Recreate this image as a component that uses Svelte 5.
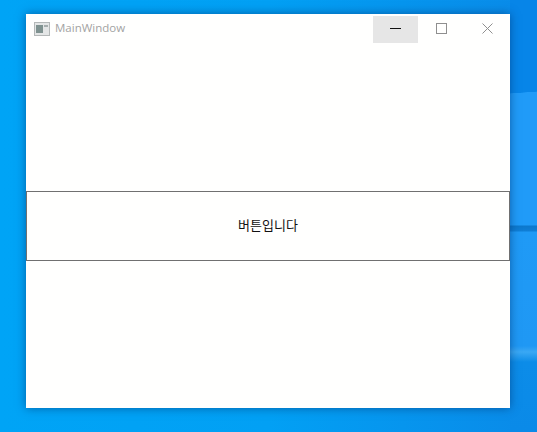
<script>
  let title = 'MainWindow';
  let label = '버튼입니다';
</script>

<div class="desktop">
  <div class="wall"></div>
  <div class="window">
    <div class="titlebar">
      <svg class="appicon" width="16" height="14" viewBox="0 0 16 14">
        <rect x="0.5" y="0.5" width="15" height="13" fill="#e4e6e6" stroke="#b4b8b8" />
        <rect x="2" y="3" width="7" height="8" fill="#7f9290" />
        <rect x="10" y="3" width="4" height="2" fill="#a6aeae" />
      </svg>
      <span class="title">{title}</span>
      <div class="controls">
        <div class="ctl min">
          <svg width="11" height="11" viewBox="0 0 11 11"><path d="M0 5.5H11" stroke="#111" fill="none" /></svg>
        </div>
        <div class="ctl">
          <svg width="11" height="11" viewBox="0 0 11 11"><rect x="0.5" y="0.5" width="10" height="10" stroke="#8f8f8f" fill="none" /></svg>
        </div>
        <div class="ctl">
          <svg width="11" height="11" viewBox="0 0 11 11"><path d="M0.5 0.5L10.5 10.5M10.5 0.5L0.5 10.5" stroke="#8f8f8f" fill="none" /></svg>
        </div>
      </div>
    </div>
    <div class="content">
      <button>{label}</button>
    </div>
  </div>
</div>

<style>
  :global(body) {
    margin: 0;
    overflow: hidden;
  }

  .desktop {
    position: relative;
    width: 537px;
    height: 432px;
    box-sizing: border-box;
    padding: 14px 27px 24px 26px;
    background: linear-gradient(90deg, #00a4f6 0%, #02a0f4 50%, #0a8ae8 100%);
    overflow: hidden;
  }

  /* wallpaper streaks right of the window */
  .wall {
    position: absolute;
    top: 0;
    right: 0;
    bottom: 0;
    width: 27px;
    background:
      linear-gradient(176deg, #0785e8 0, #0785e8 93px, transparent 93.5px),
      linear-gradient(
        180deg,
        #209bf8 0,
        #209bf8 225px,
        #0c78cc 226px,
        #0f7ed6 231px,
        #1f9af6 232px,
        #1f98f4 346px,
        #3aa8f4 352px,
        #0c8ce8 362px,
        #0a8ae8 432px
      );
  }

  .window {
    position: relative;
    display: flex;
    flex-direction: column;
    height: 100%;
    background: #fffffe;
    box-shadow: 0 0 9px rgba(0, 50, 110, 0.6);
  }

  .titlebar {
    display: flex;
    align-items: flex-start;
    height: 30px;
    padding: 0 0 0 8px;
  }

  .appicon {
    flex: none;
    margin-top: 8px;
  }

  .title {
    margin-left: 5px;
    margin-top: 5px;
    font: 11.5px/18px "Open Sans", "Noto Sans", sans-serif;
    color: #a3a3a3;
  }

  .controls {
    display: flex;
    margin-left: auto;
    margin-top: 2px;
  }

  .ctl {
    display: flex;
    align-items: center;
    justify-content: center;
    width: 46px;
    height: 27px;
    padding-bottom: 2px;
    box-sizing: border-box;
  }

  .ctl.min {
    width: 45px;
    background: #e6e6e6;
  }

  .content {
    flex: 1;
    display: flex;
    align-items: center;
  }

  button {
    width: 100%;
    height: 70px;
    margin: 0;
    padding: 0 0 3px;
    background: #fffffe;
    border: 1px solid #707070;
    font: 13px "Noto Sans CJK KR", sans-serif;
    color: #111;
  }
</style>
